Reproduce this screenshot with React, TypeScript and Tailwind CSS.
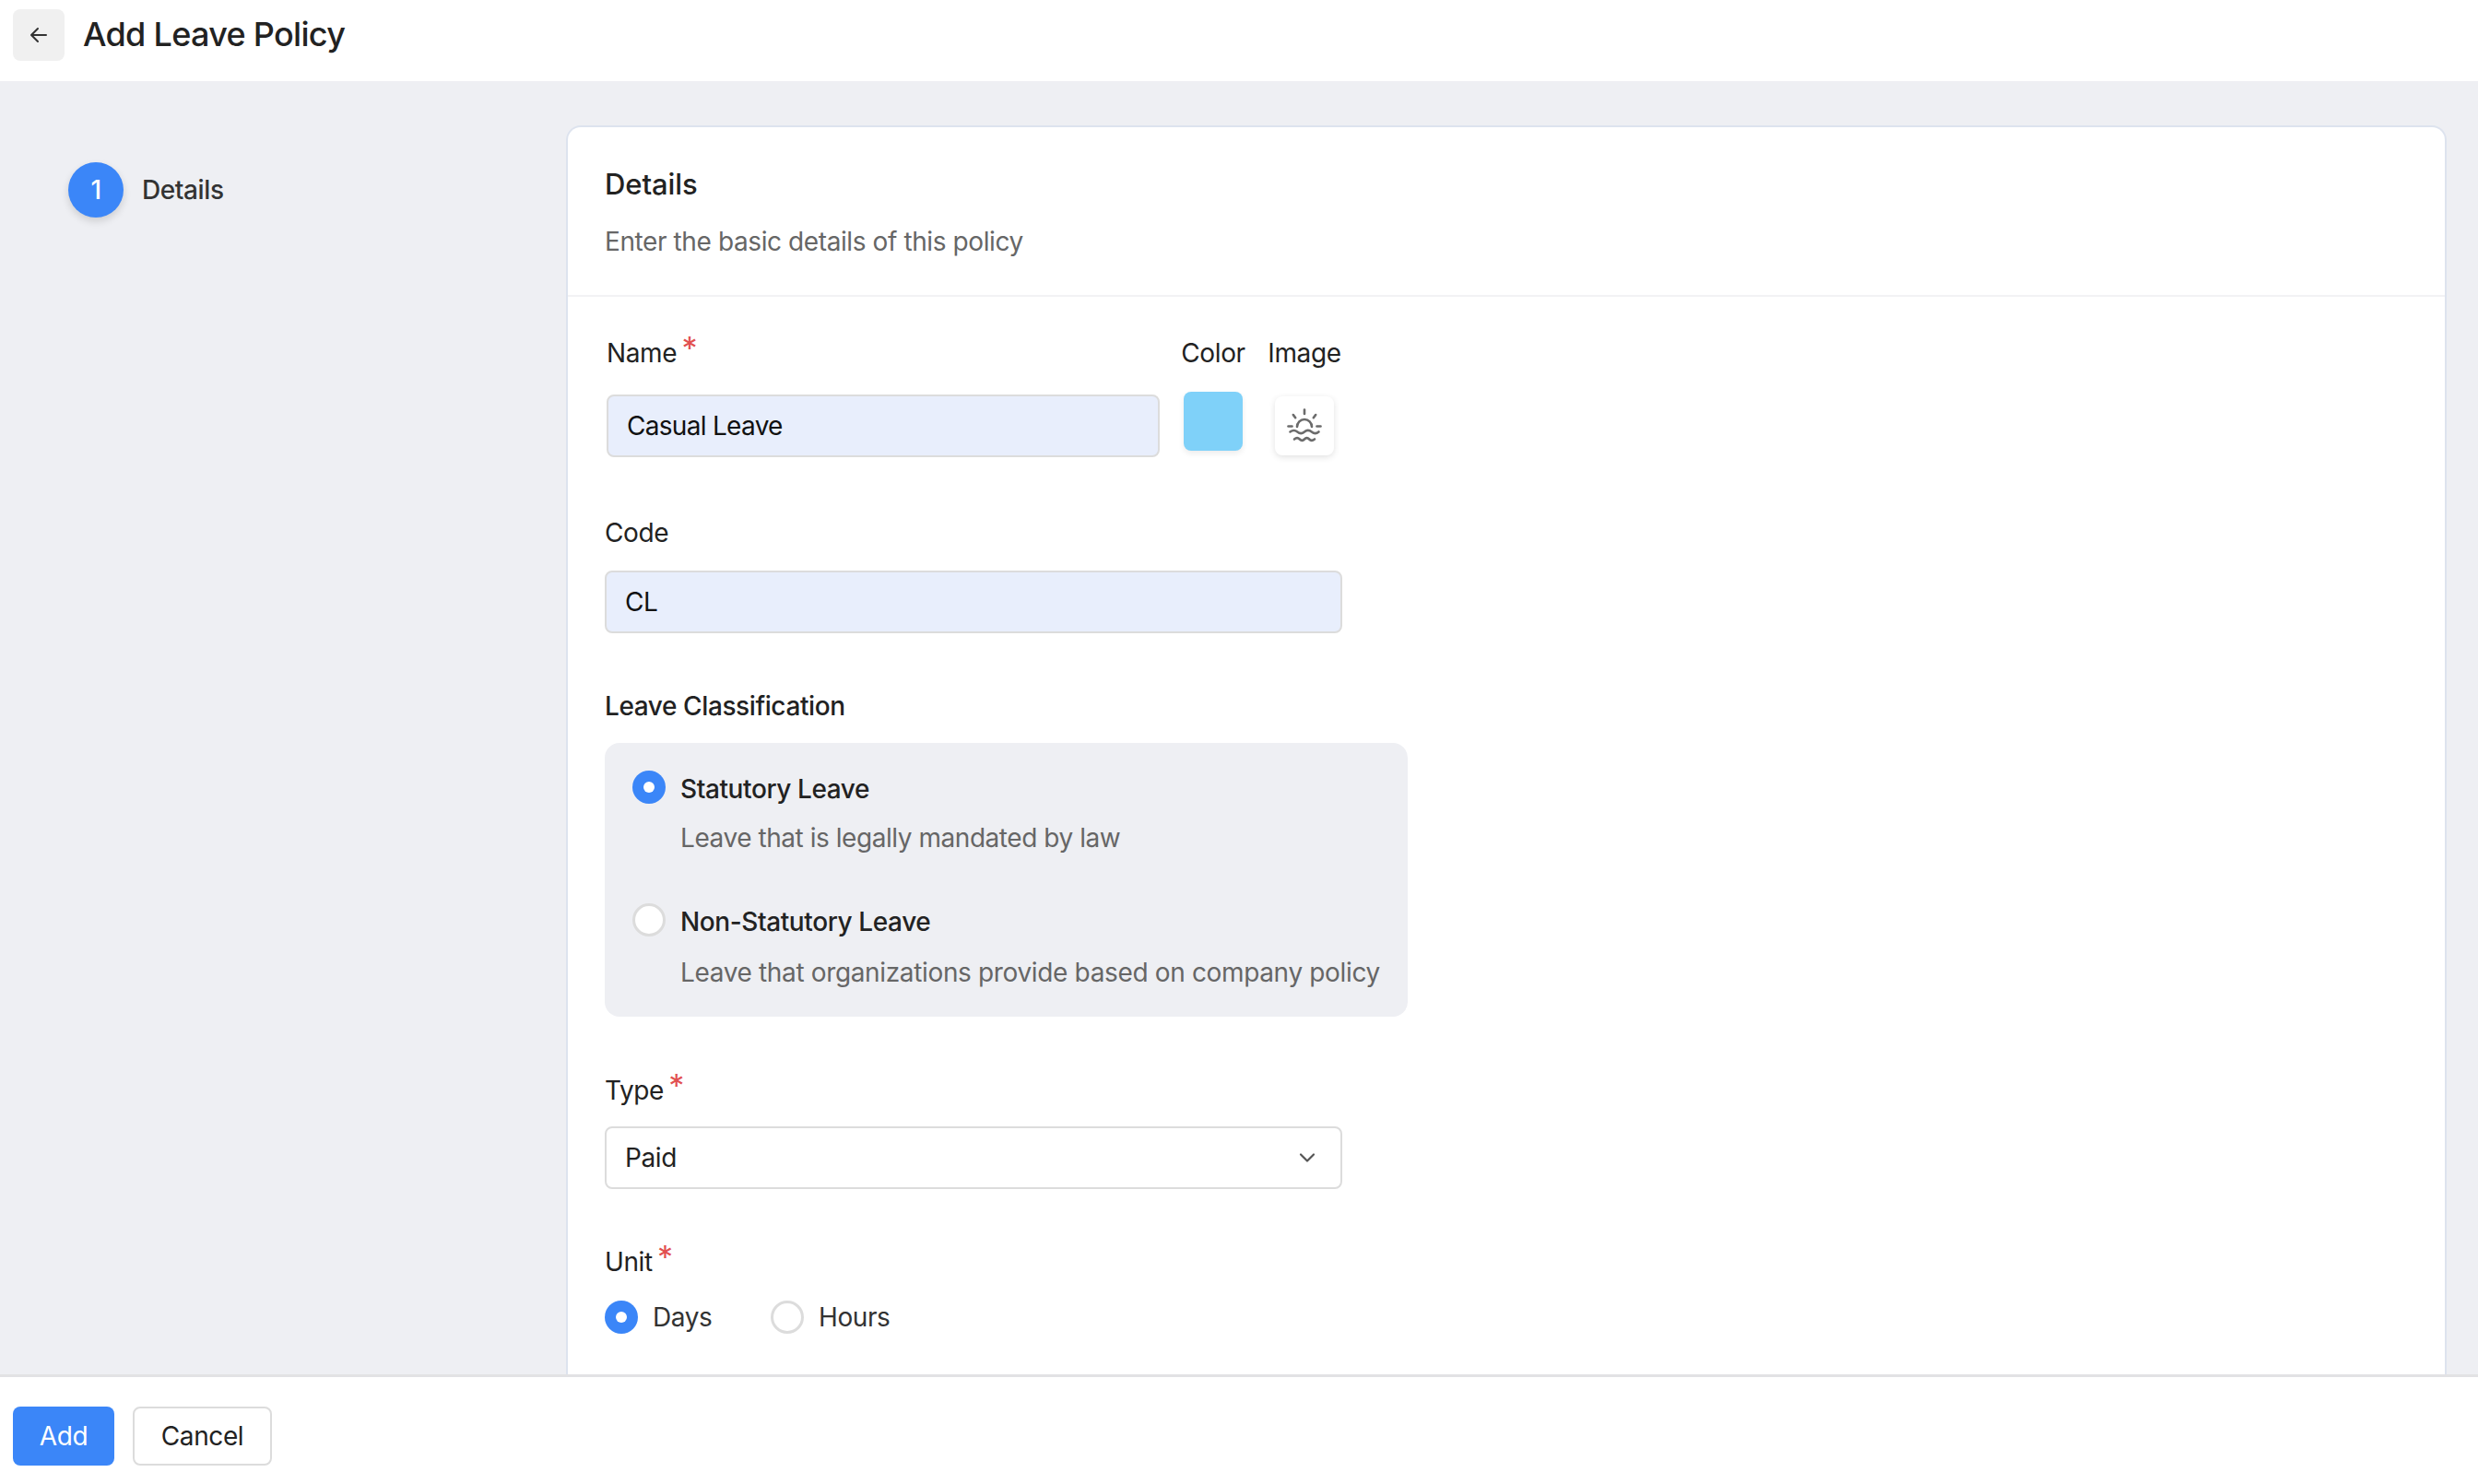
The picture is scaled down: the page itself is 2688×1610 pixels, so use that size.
import React from 'react';

const SunriseIcon = () => (
  <svg width="38" height="38" viewBox="0 0 38 38" fill="none" stroke="#6b6b6b" strokeWidth="2.6" strokeLinecap="round">
    <path d="M19 1.5v4.500" />
    <path d="M6.800 7l2.400 3.200" />
    <path d="M31.200 7l-2.400 3.200" />
    <path d="M1.500 19.500h4" />
    <path d="M32.500 19.500h4" />
    <path d="M11 20a8 8 0 0 1 16 0" />
    <path d="M3.500 25.500c3-2.200 5-2.200 7.800 0s5 2.200 7.700 0 5-2.200 7.800 0 5 2.200 7.700 0" />
    <path d="M8 33.500c2.200-1.800 4-1.800 5.800 0s3.500 1.800 5.200 0 3.500-1.800 5.200 0 3.500 1.800 5.800 0" />
  </svg>
);

const Radio = ({ checked }: { checked?: boolean }) =>
  checked ? (
    <span className="flex h-9 w-9 shrink-0 items-center justify-center rounded-full bg-[#3b86f8]">
      <span className="h-3 w-3 rounded-full bg-white" />
    </span>
  ) : (
    <span className="h-9 w-9 shrink-0 rounded-full border-[3px] border-[#dcdcdc] bg-white" />
  );

const FieldLabel = ({ children, required, className = '' }: { children: React.ReactNode; required?: boolean; className?: string }) => (
  <div className={`relative h-10 w-fit text-[28px] leading-10 text-[#222222] ${className}`}>
    {children}
    {required && <span className="absolute -right-[22px] -top-[5px] text-[34px] leading-10 text-[#e25050]">*</span>}
  </div>
);

export default function App() {
  return (
    <div className="flex h-[1610px] w-[2688px] flex-col overflow-hidden bg-white font-['Inter',sans-serif] tracking-[-0.4px] text-[#222222]">
      {/* header */}
      <header className="flex h-[88px] shrink-0 items-start bg-white pl-[14px] pt-[10px]">
        <button className="flex h-14 w-14 items-center justify-center rounded-lg bg-[#f0f0f0]">
          <svg width="24" height="24" viewBox="0 0 24 24" fill="none" stroke="#333333" strokeWidth="2" strokeLinecap="round" strokeLinejoin="round">
            <path d="M20 12H5" />
            <path d="M11 5l-7 7 7 7" />
          </svg>
        </button>
        <h1 className="ml-[20px] mt-[1px] h-14 text-[36px] font-medium leading-[52px] tracking-[-0.7px] text-[#222222]">Add Leave Policy</h1>
      </header>

      <main className="flex min-h-0 flex-1 overflow-hidden bg-[#eeeff3] pr-[34px] pt-12">
        {/* steps */}
        <aside className="w-[614px] shrink-0 pl-[74px] pt-10">
          <div className="flex items-center gap-5">
            <span className="flex h-[60px] w-[60px] items-center justify-center rounded-full bg-[#3b86f8] text-[28px] font-medium text-white shadow-[0_4px_8px_rgba(0,0,0,0.14)]">1</span>
            <span className="text-[28px] font-medium text-[#333333]">Details</span>
          </div>
        </aside>

        {/* card */}
        <section className="min-w-0 flex-1 rounded-t-2xl border-2 border-b-0 border-[#dde3ee] bg-white">
          <div className="h-[184px] border-b-2 border-[#f2f2f4] pl-10 pt-[40px]">
            <h2 className="h-11 text-[31px] font-medium leading-[44px] tracking-[-0.1px] text-[#222222]">Details</h2>
            <p className="mt-5 h-10 text-[28px] leading-10 text-[#666666]">Enter the basic details of this policy</p>
          </div>

          <div className="pl-10 pt-[41px]">
            <div className="flex pl-[2px]">
              <div className="w-[600px]">
                <FieldLabel required>Name</FieldLabel>
                <div className="mt-[25px] flex h-[68px] items-center rounded-lg border-2 border-[#dcdcdc] bg-[#e8eefc] px-5 text-[28px] tracking-[-0.7px] text-[#111111]">Casual Leave</div>
              </div>
              <div className="ml-[18px] flex w-[80px] flex-col items-center">
                <FieldLabel>Color</FieldLabel>
                <div className="mt-[22px] h-16 w-16 rounded-lg bg-[#7fd1f9] shadow-[0_3px_6px_rgba(0,0,0,0.08)]" />
              </div>
              <div className="ml-[19px] flex w-[80px] flex-col items-center">
                <FieldLabel>Image</FieldLabel>
                <div className="mt-[27px] flex h-16 w-16 items-center justify-center rounded-lg bg-white shadow-[0_2px_7px_rgba(0,0,0,0.12)]">
                  <SunriseIcon />
                </div>
              </div>
            </div>

            <FieldLabel className="mt-[62px]">Code</FieldLabel>
            <div className="mt-[21px] flex h-[68px] w-[800px] items-center rounded-lg border-2 border-[#dcdcdc] bg-[#e8eefc] px-5 text-[28px] text-[#111111]">CL</div>

            <FieldLabel className="mt-[59px] font-medium">Leave Classification</FieldLabel>
            <div className="mt-5 w-[871px] rounded-2xl bg-[#eeeff3] pb-7 pl-[30px] pt-[30px]">
              <div className="flex gap-4">
                <Radio checked />
                <div className="h-10 text-[28px] font-medium leading-10 text-[#222222]">Statutory Leave</div>
              </div>
              <p className="ml-[52px] mt-[13px] h-10 text-[28px] leading-10 tracking-[-0.45px] text-[#666666]">Leave that is legally mandated by law</p>
              <div className="mt-[51px] flex gap-4">
                <Radio />
                <div className="h-10 text-[28px] font-medium leading-10 text-[#222222]">Non-Statutory Leave</div>
              </div>
              <p className="ml-[52px] mt-[15px] h-10 text-[28px] leading-10 tracking-[-0.35px] text-[#666666]">Leave that organizations provide based on company policy</p>
            </div>

            <FieldLabel required className="mt-[60px]">Type</FieldLabel>
            <div className="mt-[19px] flex h-[68px] w-[800px] items-center justify-between rounded-lg border-2 border-[#dcdcdc] bg-white pl-5 pr-[26px] text-[28px] text-[#222222]">
              <span>Paid</span>
              <svg width="20" height="20" viewBox="0 0 20 20" fill="none" stroke="#555555" strokeWidth="2.200" strokeLinecap="round" strokeLinejoin="round">
                <path d="M3 6.500l7 7 7-7" />
              </svg>
            </div>

            <FieldLabel required className="mt-[59px]">Unit</FieldLabel>
            <div className="mt-[19px] flex items-center">
              <Radio checked />
              <span className="ml-4 w-[128px] text-[28px] text-[#333333]">Days</span>
              <Radio />
              <span className="ml-4 text-[28px] text-[#333333]">Hours</span>
            </div>
          </div>
        </section>
      </main>

      {/* footer */}
      <footer className="flex h-[119px] shrink-0 items-start gap-5 border-t-[3px] border-[#e2e2e4] bg-white pl-[14px] pt-8">
        <button className="h-16 w-[110px] rounded-lg bg-[#3b86f8] text-[28px] text-white">Add</button>
        <button className="h-16 w-[151px] rounded-lg border-2 border-[#dcdcdc] bg-white text-[28px] text-[#222222]">Cancel</button>
      </footer>
    </div>
  );
}
